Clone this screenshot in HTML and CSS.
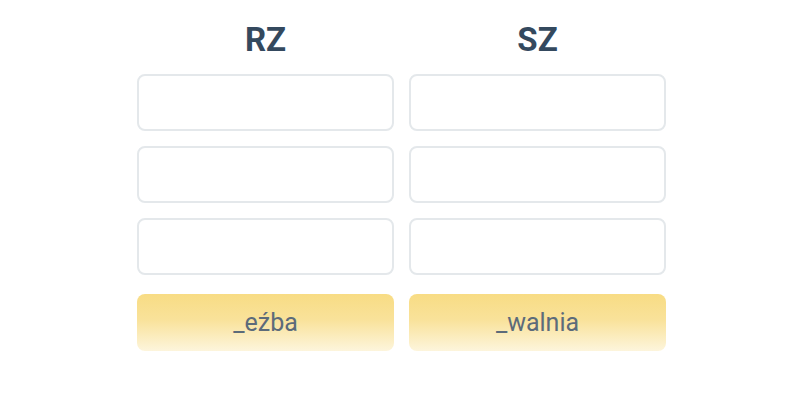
FILE: index.html
```html
<!DOCTYPE html>
<html lang="pl">
<head>
    <meta charset="UTF-8">
    <meta name="viewport" content="width=device-width, initial-scale=1.0">
    <title>RZ czy SZ</title>
    <link rel="stylesheet" href="styles.css">
</head>
<body>
    <div class="board">
        <div class="column">
            <h2 class="column-title">RZ</h2>
            <div class="slot"></div>
            <div class="slot"></div>
            <div class="slot"></div>
            <div class="word">_eźba</div>
        </div>
        <div class="column">
            <h2 class="column-title">SZ</h2>
            <div class="slot"></div>
            <div class="slot"></div>
            <div class="slot"></div>
            <div class="word">_walnia</div>
        </div>
    </div>
</body>
</html>
```

FILE: styles.css
```css
body {
    margin: 0;
    font-family: Roboto, "Liberation Sans", sans-serif;
    color: #2c3e50;
    background: #fff;
}
.board {
    display: flex;
    justify-content: center;
    gap: 15px;
    padding: 20px 0 0 3px;
}
.column {
    width: 257px;
    display: flex;
    flex-direction: column;
}
.column-title {
    margin: 0 0 14px;
    height: 40px;
    line-height: 40px;
    font-size: 33px;
    font-weight: 700;
    text-align: center;
    color: #34495e;
}
.slot {
    height: 53px;
    border: 2px solid #e4e8eb;
    border-radius: 8px;
    margin-bottom: 15px;
}
.word {
    margin-top: 4px;
    height: 57px;
    border-radius: 8px;
    background: linear-gradient(to bottom, #f8dc84 0%, #f9e29a 45%, #fdf5dc 100%);
    display: flex;
    align-items: center;
    justify-content: center;
    font-size: 25px;
    color: #5c6b7a;
}
```
